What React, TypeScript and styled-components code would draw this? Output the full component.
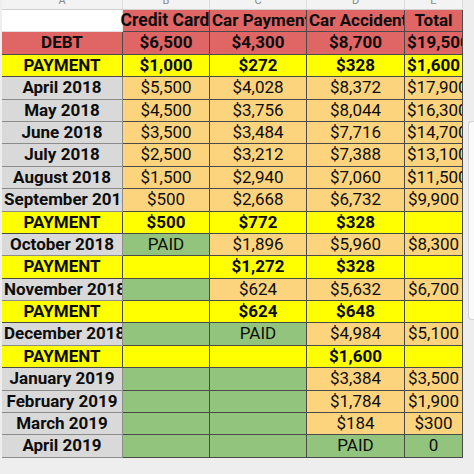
import React from 'react';
import styled, { createGlobalStyle } from 'styled-components';

const GlobalStyle = createGlobalStyle`
  html, body {
    margin: 0;
    padding: 0;
    background: #eeeeee;
  }
  * {
    box-sizing: border-box;
  }
`;

const COLORS: Record<string, string> = {
  W: '#ffffff',
  R: '#e06666',
  Y: '#ffff00',
  O: '#fdd47e',
  G: '#93c47d',
  L: '#d9d9d9',
};

const COLUMNS = '121px 87px 97px 98px 58px';

const Page = styled.div`
  display: flex;
  width: 474px;
  height: 474px;
  overflow: hidden;
  padding-left: 2px;
  font-family: Roboto, 'Liberation Sans', sans-serif;
`;

const Sheet = styled.div`
  display: flex;
  flex-direction: column;
  width: 461px;
`;

const LetterRow = styled.div`
  display: grid;
  grid-template-columns: ${COLUMNS};
  height: 10px;
  background: #f3f3f3;
  border-bottom: 1px solid #d0d0d0;
`;

const Letter = styled.div`
  overflow: hidden;
  text-align: center;
  border-right: 1px solid #dcdcdc;
  color: #8a8a8a;
  font-size: 11px;
  line-height: 12px;

  span {
    display: block;
    margin-top: -5px;
  }
`;

const Grid = styled.div`
  display: grid;
  grid-template-columns: ${COLUMNS};
  grid-auto-rows: 22.4px;
`;

const Cell = styled.div<{ $bg: string; $bold?: boolean; $line?: string; $spill?: boolean }>`
  background: ${(p) => COLORS[p.$bg]};
  border-right: 1px solid ${(p) => p.$line || '#4a4a4a'};
  border-bottom: 1px solid ${(p) => p.$line || '#4a4a4a'};
  padding: 0 2px;
  overflow: ${(p) => (p.$spill ? 'visible' : 'hidden')};
  white-space: nowrap;
  text-align: center;
  font-size: 17px;
  line-height: 21.4px;
  font-weight: ${(p) => (p.$bold ? 700 : 400)};
  color: #0d0d0d;
`;

const HeadCell = styled(Cell)`
  text-align: left;
`;

const SpillText = styled.span`
  display: block;
  margin: 0 -6px 0 -8px;
  font-size: 17.5px;
`;

const Gutter = styled.div`
  flex: 1;
  padding-top: 121px;
  padding-left: 5px;
`;

const Handle = styled.div`
  height: 199px;
  background: #fafafa;
  border: 1px solid #d4d4d4;
  border-right: none;
  border-radius: 4px 0 0 4px;
`;

type Row = { label: string; bg: string; bold?: boolean; cells: [string, string][] };

const pay = (vals: string[]): Row => ({
  label: 'PAYMENT',
  bg: 'Y',
  bold: true,
  cells: vals.map((v) => [v, 'Y'] as [string, string]),
});

const month = (label: string, cells: [string, string][]): Row => ({ label, bg: 'L', cells });

const rows: Row[] = [
  {
    label: 'DEBT',
    bg: 'R',
    bold: true,
    cells: [
      ['$6,500', 'R'],
      ['$4,300', 'R'],
      ['$8,700', 'R'],
      ['$19,500', 'R'],
    ],
  },
  pay(['$1,000', '$272', '$328', '$1,600']),
  month('April 2018', [['$5,500', 'O'], ['$4,028', 'O'], ['$8,372', 'O'], ['$17,900', 'O']]),
  month('May 2018', [['$4,500', 'O'], ['$3,756', 'O'], ['$8,044', 'O'], ['$16,300', 'O']]),
  month('June 2018', [['$3,500', 'O'], ['$3,484', 'O'], ['$7,716', 'O'], ['$14,700', 'O']]),
  month('July 2018', [['$2,500', 'O'], ['$3,212', 'O'], ['$7,388', 'O'], ['$13,100', 'O']]),
  month('August 2018', [['$1,500', 'O'], ['$2,940', 'O'], ['$7,060', 'O'], ['$11,500', 'O']]),
  month('September 2018', [['$500', 'O'], ['$2,668', 'O'], ['$6,732', 'O'], ['$9,900', 'O']]),
  pay(['$500', '$772', '$328', '']),
  month('October 2018', [['PAID', 'G'], ['$1,896', 'O'], ['$5,960', 'O'], ['$8,300', 'O']]),
  pay(['', '$1,272', '$328', '']),
  month('November 2018', [['', 'G'], ['$624', 'O'], ['$5,632', 'O'], ['$6,700', 'O']]),
  pay(['', '$624', '$648', '']),
  month('December 2018', [['', 'G'], ['PAID', 'G'], ['$4,984', 'O'], ['$5,100', 'O']]),
  pay(['', '', '$1,600', '']),
  month('January 2019', [['', 'G'], ['', 'G'], ['$3,384', 'O'], ['$3,500', 'O']]),
  month('February 2019', [['', 'G'], ['', 'G'], ['$1,784', 'O'], ['$1,900', 'O']]),
  month('March 2019', [['', 'G'], ['', 'G'], ['$184', 'O'], ['$300', 'O']]),
  month('April 2019', [['', 'G'], ['', 'G'], ['PAID', 'G'], ['0', 'G']]),
];

const App = (): React.ReactElement => {
  return (
    <>
      <GlobalStyle />
      <Page>
        <Sheet>
          <LetterRow>
            {['A', 'B', 'C', 'D', 'E'].map((l) => (
              <Letter key={l}>
                <span>{l}</span>
              </Letter>
            ))}
          </LetterRow>
          <Grid>
            <Cell $bg="W" $line="#e0e0e0" />
            <Cell $bg="R" $bold $spill>
              <SpillText>Credit Card</SpillText>
            </Cell>
            <HeadCell $bg="R" $bold>
              Car Payment
            </HeadCell>
            <HeadCell $bg="R" $bold>
              Car Accident
            </HeadCell>
            <Cell $bg="R" $bold>
              Total
            </Cell>
            {rows.map((r, i) => (
              <React.Fragment key={i}>
                <Cell $bg={r.bg} $bold $line={r.bg === 'L' ? '#8c8c8c' : undefined}>
                  {r.label}
                </Cell>
                {r.cells.map(([v, bg], j) => (
                  <Cell key={j} $bg={bg} $bold={r.bold}>
                    {v}
                  </Cell>
                ))}
              </React.Fragment>
            ))}
          </Grid>
        </Sheet>
        <Gutter>
          <Handle />
        </Gutter>
      </Page>
    </>
  );
};

export default App;
